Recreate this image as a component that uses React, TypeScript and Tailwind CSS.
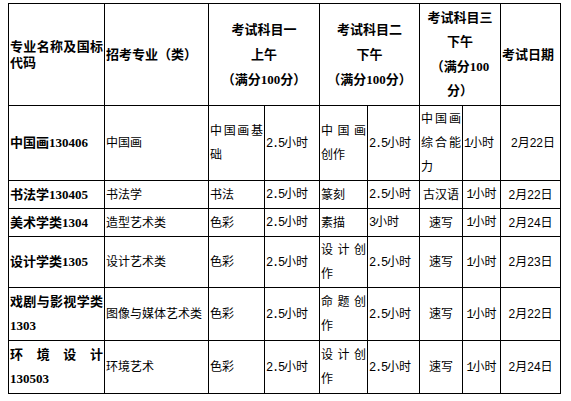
const cell = 'border border-black px-[1px] align-middle';
const bodyFont = "font-['Liberation_Sans','Noto_Sans_CJK_SC',sans-serif] text-[12px] leading-[24px]";
const boldFont = "font-['Liberation_Serif','Noto_Sans_CJK_SC',serif] text-[13px] font-bold";

function Spread({ text }: { text: string }) {
  return (
    <div className="flex justify-between">
      {[...text].map((c, i) => (
        <span key={i}>{c}</span>
      ))}
    </div>
  );
}

function Hours({ n }: { n: string }) {
  return (
    <>
      <span className="font-['Liberation_Mono',monospace] tracking-[-1.2px]">{n}</span>小时
    </>
  );
}

type Row = {
  h: string;
  name: React.ReactNode;
  major: string;
  s1: React.ReactNode;
  s2: React.ReactNode;
  s2h: string;
  s3: React.ReactNode;
  s3center?: boolean;
  date: string;
  first?: boolean;
};

const rows: Row[] = [
  {
    h: 'h-[75px]',
    name: '中国画130406',
    major: '中国画',
    s1: (
      <>
        <Spread text="中国画基" />
        <div>础</div>
      </>
    ),
    s2: (
      <>
        <Spread text="中国画" />
        <div>创作</div>
      </>
    ),
    s2h: '2.5',
    s3: (
      <>
        <Spread text="中国画" />
        <Spread text="综合能" />
        <div>力</div>
      </>
    ),
    date: '2月22日',
    first: true,
  },
  { h: 'h-[28px]', name: '书法学130405', major: '书法学', s1: '书法', s2: '篆刻', s2h: '2.5', s3: '古汉语', s3center: true, date: '2月22日' },
  { h: 'h-[28px]', name: '美术学类1304', major: '造型艺术类', s1: '色彩', s2: '素描', s2h: '3', s3: '速写', s3center: true, date: '2月24日' },
  {
    h: 'h-[51px]',
    name: '设计学类1305',
    major: '设计艺术类',
    s1: '色彩',
    s2: (
      <>
        <Spread text="设计创" />
        <div>作</div>
      </>
    ),
    s2h: '2.5',
    s3: '速写',
    s3center: true,
    date: '2月23日',
  },
  {
    h: 'h-[53px]',
    name: (
      <>
        <Spread text="戏剧与影视学类" />
        <div>1303</div>
      </>
    ),
    major: '图像与媒体艺术类',
    s1: '色彩',
    s2: (
      <>
        <Spread text="命题创" />
        <div>作</div>
      </>
    ),
    s2h: '2.5',
    s3: '速写',
    s3center: true,
    date: '2月22日',
  },
  {
    h: 'h-[53px]',
    name: (
      <>
        <Spread text="环境设计" />
        <div>130503</div>
      </>
    ),
    major: '环境艺术',
    s1: '色彩',
    s2: (
      <>
        <Spread text="设计创" />
        <div>作</div>
      </>
    ),
    s2h: '2.5',
    s3: '速写',
    s3center: true,
    date: '2月24日',
  },
];

export default function App() {
  return (
    <div className="bg-white w-[571px] h-[401px] pt-[3px] pl-[8px] text-black">
      <table className="table-fixed border-collapse w-[553px]">
        <colgroup>
          <col className="w-[96px]" />
          <col className="w-[104px]" />
          <col className="w-[56px]" />
          <col className="w-[55px]" />
          <col className="w-[48px]" />
          <col className="w-[52px]" />
          <col className="w-[43px]" />
          <col className="w-[38px]" />
          <col className="w-[60px]" />
        </colgroup>
        <tbody>
          <tr className={`h-[102px] ${boldFont}`}>
            <td className={`${cell} leading-[16px]`}>
              <Spread text="专业名称及国标" />
              <div>代码</div>
            </td>
            <td className={`${cell} leading-[25px]`}>招考专业（类）</td>
            <td colSpan={2} className={`${cell} text-center leading-[25px]`}>
              <div>考试科目一</div>
              <div>上午</div>
              <div>（满分100分）</div>
            </td>
            <td colSpan={2} className={`${cell} text-center leading-[25px]`}>
              <div>考试科目二</div>
              <div>下午</div>
              <div>（满分100分）</div>
            </td>
            <td colSpan={2} className={`${cell} text-center leading-[24.5px]`}>
              <div>考试科目三</div>
              <div>下午</div>
              <div>（满分100</div>
              <div>分）</div>
            </td>
            <td className={`${cell} leading-[25px]`}>考试日期</td>
          </tr>
          {rows.map((r, i) => (
            <tr key={i} className={`${r.h} ${bodyFont}`}>
              <td className={`${cell} ${boldFont} leading-[24px]`}>{r.name}</td>
              <td className={cell}>{r.major}</td>
              <td className={cell}>{r.s1}</td>
              <td className={cell}>
                <Hours n="2.5" />
              </td>
              <td className={cell}>{r.s2}</td>
              <td className={cell}>
                <Hours n={r.s2h} />
              </td>
              <td className={`${cell} ${r.s3center ? 'text-center' : ''}`}>{r.s3}</td>
              <td className={`${cell} ${r.first ? '' : 'text-center'}`}>
                <Hours n="1" />
              </td>
              <td className={`${cell} ${r.first ? 'text-right pr-[5px]' : 'text-center'}`}>{r.date}</td>
            </tr>
          ))}
        </tbody>
      </table>
    </div>
  );
}
